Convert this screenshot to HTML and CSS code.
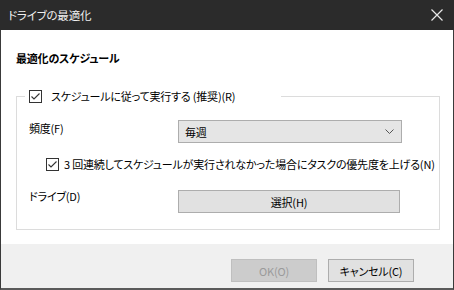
FILE: index.html
```html
<!DOCTYPE html>
<html>
  <head>
    <meta charset="UTF-8">
    <title>ドライブの最適化</title>
    <link rel="stylesheet" href="styles.css">
  </head>
  <body>
    <div class="window">
      <div class="titlebar">
        <span class="title">ドライブの最適化</span>
        <svg class="close" width="12" height="12" viewBox="0 0 12 12">
          <path d="M0.5 0.5 L11.5 11.5 M11.5 0.5 L0.5 11.5" stroke="#e8e8e8" stroke-width="1.2" fill="none"/>
        </svg>
      </div>
      <div class="content">
        <h1 class="heading">最適化のスケジュール</h1>
        <fieldset class="group">
          <legend class="group-legend">
            <span class="check">
              <svg width="13" height="13" viewBox="0 0 13 13">
                <rect x="0.5" y="0.5" width="12" height="12" fill="#fff" stroke="#333"/>
                <path d="M2.5 6.5 L5 9 L10.5 3.5" stroke="#333" stroke-width="1.1" fill="none"/>
              </svg>
            </span>
            <span>スケジュールに従って実行する (推奨)(R)</span>
          </legend>
          <div class="row row-freq">
            <span class="row-label">頻度(F)</span>
            <div class="select">
              <span>毎週</span>
              <svg width="9" height="5" viewBox="0 0 9 5">
                <path d="M0.5 0.5 L4.5 4.5 L8.5 0.5" stroke="#555" stroke-width="1" fill="none"/>
              </svg>
            </div>
          </div>
          <div class="row row-check">
            <span class="check">
              <svg width="13" height="13" viewBox="0 0 13 13">
                <rect x="0.5" y="0.5" width="12" height="12" fill="#fff" stroke="#333"/>
                <path d="M2.5 6.5 L5 9 L10.5 3.5" stroke="#333" stroke-width="1.1" fill="none"/>
              </svg>
            </span>
            <span>3 回連続してスケジュールが実行されなかった場合にタスクの優先度を上げる(N)</span>
          </div>
          <div class="row row-drive">
            <span class="row-label">ドライブ(D)</span>
            <button class="btn btn-wide">選択(H)</button>
          </div>
        </fieldset>
      </div>
      <div class="footer">
        <button class="btn btn-disabled">OK(O)</button>
        <button class="btn">キャンセル(C)</button>
      </div>
    </div>
  </body>
</html>
```

FILE: styles.css
```css
body {
    margin: 0;
    font-family: "Noto Sans CJK JP", sans-serif;
    font-size: 11px;
    font-feature-settings: "palt";
    letter-spacing: -0.2px;
    color: #000;
    background-color: #fff;
}

.window {
    width: 454px;
    height: 290px;
    box-sizing: border-box;
    border: 1px solid #3a3a3a;
    border-top: none;
    border-bottom: 2px solid #5a5a5a;
    display: flex;
    flex-direction: column;
}

.titlebar {
    height: 30px;
    margin: 0 -1px;
    background-color: #2b2b2b;
    color: #f0f0f0;
    display: flex;
    align-items: center;
    justify-content: space-between;
    padding: 0 11px 0 8px;
    font-size: 11.5px;
}

.content {
    height: 214px;
    box-sizing: border-box;
    padding: 20px 14px 0 15px;
    background-color: #fff;
}

.heading {
    margin: 0;
    font-size: 11px;
    font-weight: bold;
    line-height: 16px;
}

.group {
    margin: 22px 0 0 0;
    width: 424px;
    min-width: 0;
    box-sizing: border-box;
    border: 1px solid #dcdcdc;
    padding: 0 12px 16px 12px;
}

.group-legend {
    margin-left: -4px;
    padding: 0 46px 0 4px;
    display: flex;
    align-items: center;
    gap: 9px;
    line-height: 16px;
}

.check {
    display: flex;
    width: 13px;
    height: 13px;
}

.row {
    display: flex;
    align-items: center;
}

.row-label {
    width: 149px;
    align-self: flex-start;
    line-height: 16px;
}

.row-freq {
    margin-top: 16px;
    height: 23px;
}

.row-check {
    margin-top: 13px;
    height: 16px;
    padding-left: 17px;
    gap: 5px;
    white-space: nowrap;
}

.row-drive {
    margin-top: 18px;
    height: 23px;
}

.row-drive .row-label {
    margin-top: -2px;
}

.select {
    width: 224px;
    height: 23px;
    box-sizing: border-box;
    border: 1px solid #adadad;
    background-color: #e5e5e5;
    display: flex;
    align-items: center;
    justify-content: space-between;
    padding: 0 7px 0 6px;
}

.btn {
    width: 86px;
    height: 23px;
    box-sizing: border-box;
    border: 1px solid #adadad;
    background-color: #e1e1e1;
    font-family: inherit;
    font-size: 11px;
    font-feature-settings: "palt";
    letter-spacing: -0.2px;
    color: #000;
    padding: 0;
}

.btn-wide {
    width: 222px;
}

.btn-disabled {
    background-color: #cccccc;
    border-color: #bfbfbf;
    color: #9a9a9a;
}

.footer {
    flex: 1;
    background-color: #f0f0f0;
    display: flex;
    justify-content: flex-end;
    align-items: flex-start;
    gap: 11px;
    padding: 15px 39px 0 0;
}
```
